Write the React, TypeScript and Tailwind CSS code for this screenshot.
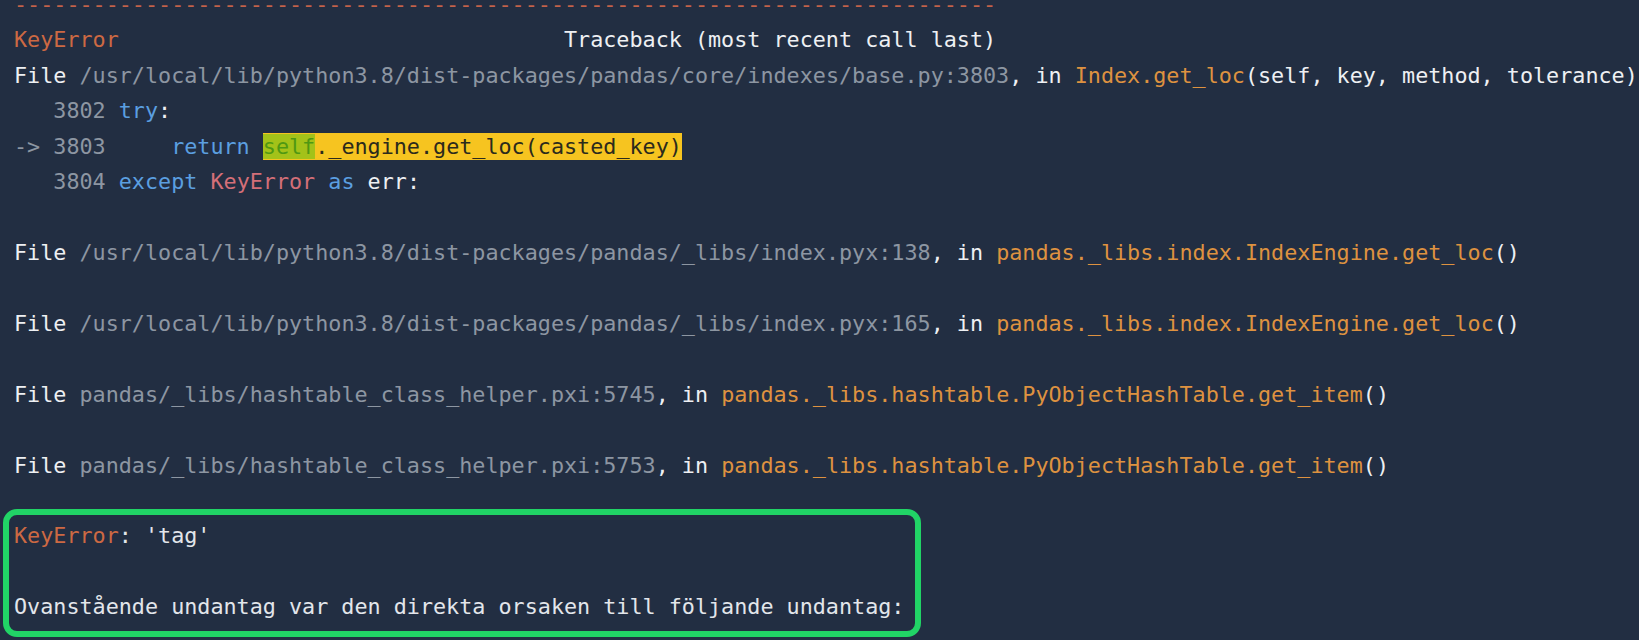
import React from "react";

type Seg = { t: string; c?: string };

const WHITE = "text-[#eef0f3]";
const GRAY = "text-[#8d96a2]";
const ORANGE = "text-[#de9240]";
const RED = "text-[#cd6943]";
const BLUE = "text-[#5b9fe0]";

function Line({ segs }: { segs: Seg[] }) {
  return (
    <div className="h-[35.44px] leading-[35.44px] whitespace-pre">
      {segs.map((s, i) => (
        <span key={i} className={s.c ?? WHITE}>
          {s.t}
        </span>
      ))}
    </div>
  );
}

const Blank = () => <div className="h-[35.44px]" />;

function FileLine({ path, fn }: { path: string; fn: string }) {
  return (
    <Line
      segs={[
        { t: "File " },
        { t: path, c: GRAY },
        { t: ", in " },
        { t: fn, c: ORANGE },
        { t: "()" },
      ]}
    />
  );
}

export default function App() {
  return (
    <div className="h-[640px] w-full overflow-hidden bg-[#222e42]">
      <div
        className="-mt-[13.2px] pl-[14px] text-[21.75px]"
        style={{ fontFamily: '"DejaVu Sans Mono", "Liberation Mono", monospace' }}
      >
        <Line segs={[{ t: "-".repeat(75), c: "text-[#c4624a]" }]} />
        <Line
          segs={[
            { t: "KeyError", c: RED },
            { t: " ".repeat(34) + "Traceback (most recent call last)" },
          ]}
        />
        <Line
          segs={[
            { t: "File " },
            { t: "/usr/local/lib/python3.8/dist-packages/pandas/core/indexes/base.py:3803", c: GRAY },
            { t: ", in " },
            { t: "Index.get_loc", c: ORANGE },
            { t: "(self, key, method, tolerance)" },
          ]}
        />
        <Line
          segs={[
            { t: "   3802 ", c: GRAY },
            { t: "try", c: BLUE },
            { t: ":" },
          ]}
        />
        <div className="h-[35.44px] leading-[35.44px] whitespace-pre">
          <span className={GRAY}>-&gt; 3803     </span>
          <span className={BLUE}>return </span>
          <span className="bg-[#f6c420] py-[1px] text-[#2b2a1c]">
            <span className="bg-[#a3c219] text-[#4f9812]">self</span>
            ._engine.get_loc(casted_key)
          </span>
        </div>
        <Line
          segs={[
            { t: "   3804 ", c: GRAY },
            { t: "except ", c: BLUE },
            { t: "KeyError ", c: "text-[#d46f78]" },
            { t: "as ", c: BLUE },
            { t: "err:" },
          ]}
        />
        <Blank />
        <FileLine
          path="/usr/local/lib/python3.8/dist-packages/pandas/_libs/index.pyx:138"
          fn="pandas._libs.index.IndexEngine.get_loc"
        />
        <Blank />
        <FileLine
          path="/usr/local/lib/python3.8/dist-packages/pandas/_libs/index.pyx:165"
          fn="pandas._libs.index.IndexEngine.get_loc"
        />
        <Blank />
        <FileLine
          path="pandas/_libs/hashtable_class_helper.pxi:5745"
          fn="pandas._libs.hashtable.PyObjectHashTable.get_item"
        />
        <Blank />
        <FileLine
          path="pandas/_libs/hashtable_class_helper.pxi:5753"
          fn="pandas._libs.hashtable.PyObjectHashTable.get_item"
        />
        <Blank />

        {/* highlighted final error */}
        <div className="-ml-[11px] -mt-[9.4px] w-[918px] rounded-[14px] border-[6px] border-[#21d466] pb-[6px] pl-[5px] pt-[3.4px]">
          <Line
            segs={[
              { t: "KeyError", c: RED },
              { t: ": 'tag'", c: "text-[#e3e6eb]" },
            ]}
          />
          <Blank />
          <Line
            segs={[
              {
                t: "Ovanstående undantag var den direkta orsaken till följande undantag:",
                c: "text-[#e3e6eb]",
              },
            ]}
          />
        </div>
      </div>
    </div>
  );
}
